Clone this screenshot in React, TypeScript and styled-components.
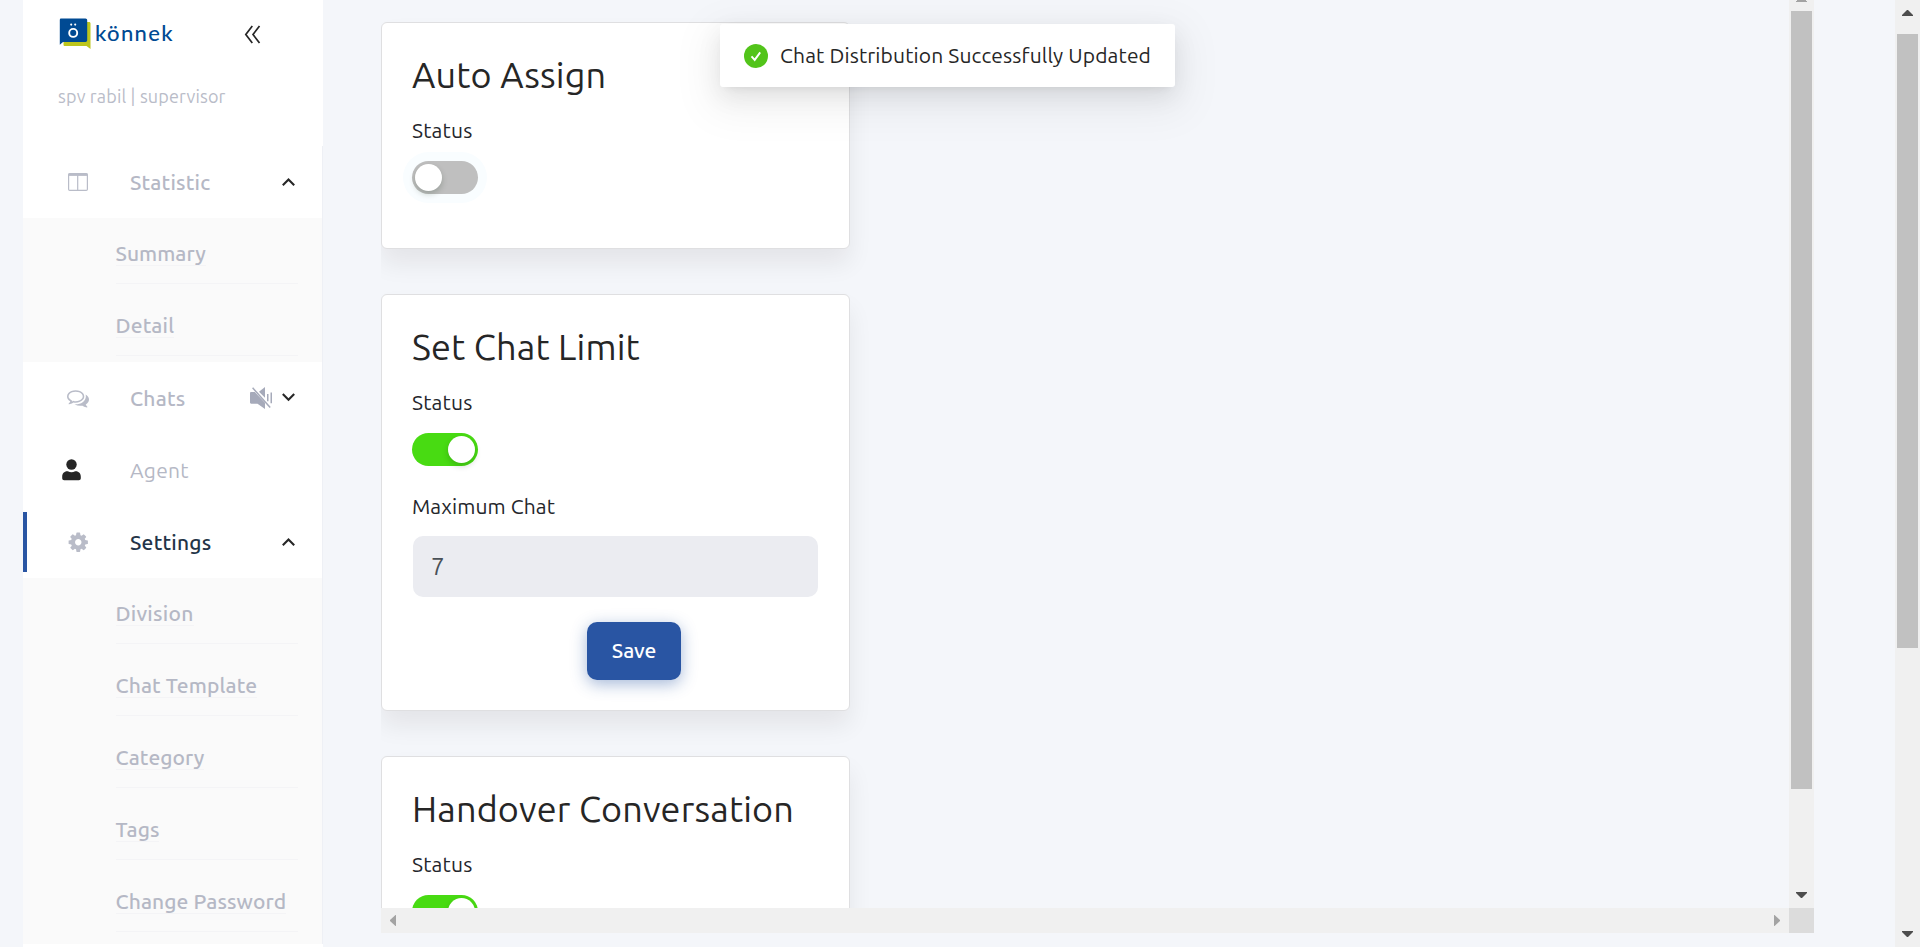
import React from 'react';
import styled, { createGlobalStyle, css } from 'styled-components';

const Global = createGlobalStyle`
  *, *::before, *::after { box-sizing: border-box; }
  body {
    margin: 0;
    background: #f4f6fa;
    color: #262626;
    font-family: 'Ubuntu', 'Noto Sans', sans-serif;
    font-size: 21px;
    overflow: hidden;
  }
`;

const Page = styled.div`
  position: relative;
  display: flex;
  width: 1920px;
  height: 947px;
  padding-left: 23px;
  overflow: hidden;
`;

/* ---------- Sidebar ---------- */

const Sidebar = styled.aside`
  display: flex;
  flex-direction: column;
  flex: none;
  width: 300px;
  background: #fff;
`;

const SidebarHeader = styled.header`
  flex: none;
  height: 146px;
  padding: 18px 0 0 36px;
`;

const BrandRow = styled.div`
  display: flex;
  align-items: flex-start;
  height: 32px;
`;

const BrandMark = styled.svg`
  flex: none;
  width: 32px;
  height: 32px;
`;

const BrandName = styled.span`
  margin-left: 4px;
  width: 149px;
  color: #004a93;
  font: 500 22px/30px 'Lato', 'Noto Sans', sans-serif;
  letter-spacing: 1.35px;
`;

const CollapseButton = styled.button`
  display: flex;
  margin: 7px 0 0;
  padding: 0;
  border: 0;
  background: none;
`;

const UserLine = styled.div`
  margin: 33px 0 0 -1px;
  font-size: 18px;
  line-height: 26px;
  letter-spacing: 0.16px;
  color: #b9bcc8;
  white-space: nowrap;
`;

const Menu = styled.nav`
  display: flex;
  flex-direction: column;
  border-right: 1px solid #eef0f5;
`;

const MenuItem = styled.a<{ $active?: boolean }>`
  display: flex;
  align-items: center;
  height: 72px;
  padding: 0 27px 0 28px;
  color: ${(p) => (p.$active ? '#233447' : '#b5b8c5')};
  ${(p) =>
    p.$active &&
    css`
      background: linear-gradient(#2955a3, #2955a3) 0 6px / 4px 60px no-repeat;
    `}
`;

const MenuIcon = styled.span<{ $shift?: number }>`
  display: flex;
  align-items: center;
  justify-content: center;
  width: 54px;
  margin-right: 25px;
  padding-right: ${(p) => p.$shift ?? 0}px;
`;

const MenuLabel = styled.span<{ $weight?: number }>`
  flex: 1;
  font-weight: ${(p) => p.$weight ?? 500};
  line-height: 32px;
  letter-spacing: 0.22px;
`;

const MuteIcon = styled.svg`
  width: 22px;
  height: 22px;
  margin-right: 10px;
  color: #a6aaba;
`;

const SubMenu = styled.div<{ $bottom: number }>`
  display: flex;
  flex-direction: column;
  padding: 0 24px ${(p) => p.$bottom}px 92.500px;
  background: #fafafa;
`;

const SubItem = styled.a`
  display: flex;
  align-items: flex-start;
  height: 72px;
  padding-top: 25px;
  border-bottom: 1px solid #f4f4f6;
  &:first-child {
    height: 66px;
    padding-top: 19px;
  }
`;

const SubLabel = styled.span<{ $spacing: number }>`
  height: 29px;
  border-bottom: 1px solid #f4f4f6;
  color: #b5b8c5;
  font-weight: 500;
  line-height: 32px;
  letter-spacing: ${(p) => p.$spacing}px;
  white-space: nowrap;
`;

/* ---------- Scrolling content ---------- */

const Panel = styled.main`
  display: grid;
  grid-template-columns: 1408px 25px;
  grid-template-rows: 908px 25px;
  flex: none;
  height: 933px;
  margin: 0 81px 0 58px;
`;

const Viewport = styled.div`
  display: flex;
  flex-direction: column;
  gap: 45px;
  padding-top: 22px;
  overflow: hidden;
`;

const Card = styled.section<{ $height: number }>`
  flex: none;
  width: 469px;
  height: ${(p) => p.$height}px;
  padding: 30px;
  border: 1px solid #dfdfe1;
  border-radius: 6px;
  background: #fff;
  box-shadow: 0 15px 25px rgba(24, 10, 10, 0.07);
`;

const CardTitle = styled.h2`
  margin: 0;
  font-size: 36px;
  font-weight: 400;
  line-height: 44px;
  letter-spacing: 0.16px;
  white-space: nowrap;
`;

const FieldLabel = styled.div<{ $top?: number; $spacing?: number }>`
  height: 32px;
  margin-top: ${(p) => p.$top ?? 16}px;
  line-height: ${(p) => (p.$top ? 32 : 34)}px;
  letter-spacing: ${(p) => p.$spacing ?? 0.2}px;
  color: #24262b;
`;

const Toggle = styled.button<{ $on?: boolean; $focused?: boolean }>`
  display: flex;
  justify-content: ${(p) => (p.$on ? 'flex-end' : 'flex-start')};
  align-items: center;
  width: 66px;
  height: 33px;
  margin: 16px 0 0;
  padding: 0 3px;
  border: 0;
  border-radius: 17px;
  background: ${(p) => (p.$on ? '#48db12' : '#bfbfbf')};
  box-shadow: ${(p) => (p.$focused ? '0 0 0 9px #f9fdff' : 'none')};
`;

const Knob = styled.span`
  width: 27px;
  height: 27px;
  border-radius: 50%;
  background: #fff;
  box-shadow: 0 3px 6px rgba(0, 35, 11, 0.2);
`;

const NumberInput = styled.input`
  display: block;
  width: 405px;
  height: 61px;
  margin: 14px 1px 0;
  padding: 0 18px;
  border: 0;
  border-radius: 10px;
  background: #ebecf1;
  color: #495057;
  font: 400 24px 'Ubuntu', 'Noto Sans', sans-serif;
`;

const SaveButton = styled.button`
  display: block;
  width: 94px;
  height: 58px;
  margin: 25px 0 0 175px;
  padding: 0 0 2px;
  border: 0;
  border-radius: 10px;
  background: #2955a3;
  box-shadow: 0 4px 16px rgba(41, 85, 163, 0.42);
  color: #fff;
  font: 500 21px/56px 'Ubuntu', 'Noto Sans', sans-serif;
  letter-spacing: -0.1px;
`;

/* ---------- Scrollbars ---------- */

const VerticalBar = styled.div<{ $top: number; $bottom: number }>`
  display: flex;
  flex-direction: column;
  justify-content: space-between;
  align-items: center;
  flex: none;
  width: 25px;
  padding: ${(p) => p.$top}px 0 ${(p) => p.$bottom}px;
  overflow: hidden;
  background: #f0f0f0;
`;

const VerticalThumb = styled.div<{ $gap: number; $length: number }>`
  flex: none;
  width: 21px;
  height: ${(p) => p.$length}px;
  margin: ${(p) => p.$gap}px 0 auto;
  background: #c1c1c1;
`;

const ClippedArrow = styled.span`
  width: 11px;
  height: 2px;
  background: linear-gradient(#a3a3a3, #a3a3a3) 50% 0 / 9px 1px no-repeat,
    linear-gradient(#a3a3a3, #a3a3a3) 0 1px / 11px 1px no-repeat;
`;

const HorizontalBar = styled.div`
  display: flex;
  align-items: center;
  justify-content: space-between;
  padding: 0 9px;
  background: #f0f0f0;
`;

const Corner = styled.div`
  background: #dcdcdc;
`;

const ArrowSvg = styled.svg<{ $muted?: boolean }>`
  flex: none;
  display: block;
  fill: ${(p) => (p.$muted ? '#a3a3a3' : '#4d4d4d')};
`;

/* ---------- Toast ---------- */

const Toast = styled.div`
  position: absolute;
  top: 24px;
  left: 720px;
  display: flex;
  align-items: center;
  width: 455px;
  height: 63px;
  padding-left: 24px;
  border-radius: 3px;
  background: #fff;
  box-shadow: 0 4.5px 9px -6px rgba(0, 0, 0, 0.12), 0 9px 24px rgba(0, 0, 0, 0.08),
    0 13.5px 42px 12px rgba(0, 0, 0, 0.05);
`;

const ToastText = styled.span`
  margin-left: 12px;
  padding-bottom: 2px;
  line-height: 32px;
  letter-spacing: 0.14px;
  white-space: nowrap;
`;

const arrows = {
  up: { w: 11, h: 6, d: 'M0 6V5L5 0h1l5 5v1z' },
  down: { w: 11, h: 6, d: 'M0 0v1l5 5h1l5-5V0z' },
  left: { w: 6, h: 11, d: 'M6 0H5.5L0 5v1l5.5 5H6z' },
  right: { w: 6, h: 11, d: 'M0 0h.5L6 5v1L.5 11H0z' },
};

function Arrow({ dir, muted }: { dir: keyof typeof arrows; muted?: boolean }) {
  const a = arrows[dir];
  return (
    <ArrowSvg $muted={muted} width={a.w} height={a.h} viewBox={`0 0 ${a.w} ${a.h}`}>
      <path d={a.d} />
    </ArrowSvg>
  );
}

function Chevron({ open }: { open?: boolean }) {
  return (
    <svg width="13" height="10" viewBox="0 0 13 10" fill="none" stroke="#262626" strokeWidth="2.1">
      <path d={open ? 'M.8 8.200 6.500 2.500l5.700 5.700' : 'M.8 1l5.700 5.700L12.200 1'} />
    </svg>
  );
}

const TableIcon = () => (
  <svg width="20" height="18" viewBox="0 0 20 18" fill="none" stroke="#b9bcc8" strokeWidth="1.2">
    <rect x="0.6" y="0.6" width="18.8" height="16.8" rx="1.2" />
    <path d="M0.5 1.7h19" strokeWidth="2.4" />
    <path d="M9.7 2v15.5" />
  </svg>
);

const ChatsIcon = () => (
  <svg width="22" height="22" viewBox="0 0 1792 1792" fill="#b9bcc8">
    <path d="M704 384q-153 0-286 52t-211.500 141-78.500 191q0 82 53 158t149 132l97 56-35 84q34-20 62-39l44-31 53 10q78 14 153 14 153 0 286-52t211.500-141 78.500-191-78.500-191-211.500-141-286-52zm0-128q191 0 353.500 68.500t256.500 186.500 94 257-94 257-256.500 186.500-353.500 68.500q-86 0-176-16-124 88-278 128-36 9-86 16h-3q-11 0-20.500-8t-11.500-21q-1-3-1-6.500t.5-6.500 2-6l2.500-5 3.500-5.500 4-5 4.500-5 4-4.500q5-6 23-25t26-29.500 22.500-29 25-38.500 20.500-44q-124-72-195-177t-71-224q0-139 94-257t256.500-186.500 353.500-68.500zm822 1169q10 24 20.500 44t25 38.500 22.500 29 26 29.500 23 25q1 1 4 4.500t4.500 5 4 5 3.500 5.500l2.500 5 2 6 .5 6.500-1 6.500q-3 14-13 22t-22 7q-50-7-86-16-154-40-278-128-90 16-176 16-271 0-472-132 58 4 88 4 161 0 309-45t264-129q125-92 192-212t67-254q0-77-23-152 129 71 204 178t75 230q0 120-71 224.500t-195 176.500z" />
  </svg>
);

const GearIcon = () => (
  <svg width="22.5" height="22.5" viewBox="0 0 1792 1792" fill="#b9bcc8">
    <path d="M1152 896q0-106-75-181t-181-75-181 75-75 181 75 181 181 75 181-75 75-181zm512-109v222q0 12-8 23t-20 13l-185 28q-19 54-39 91 35 50 107 138 10 12 10 25t-9 23q-27 37-99 108t-94 71q-12 0-26-9l-138-108q-44 23-91 38-16 136-29 186-7 28-36 28h-222q-14 0-24.500-8.500t-11.500-21.500l-28-184q-49-16-90-37l-141 107q-10 9-25 9-14 0-25-11-126-114-165-168-7-10-7-23 0-12 8-23 15-21 51-66.500t54-70.500q-27-50-41-99l-183-27q-13-2-21-12.500t-8-23.500v-222q0-12 8-23t19-13l186-28q14-46 39-92-40-57-107-138-10-12-10-24 0-10 9-23 26-36 98.500-107.500t94.500-71.500q13 0 26 10l138 107q44-23 91-38 16-136 29-186 7-28 36-28h222q14 0 24.500 8.500t11.500 21.500l28 184q49 16 90 37l142-107q9-9 24-9 13 0 25 10 129 119 165 170 7 8 7 22 0 12-8 23-15 21-51 66.500t-54 70.500q26 50 41 98l183 28q13 2 21 12.500t8 23.500z" />
  </svg>
);

const PersonIcon = () => (
  <svg width="19" height="22" viewBox="0 0 19 22" fill="#262626">
    <circle cx="9.5" cy="5.5" r="5.2" />
    <path d="M0.2 19.2v-1.5c0-3 2-5.4 5-5.4h.6a8 8 0 0 0 7.400 0h.6c3 0 5 2.400 5 5.400v1.500c0 1.200-.8 2-2 2H2.200c-1.200 0-2-.8-2-2z" />
  </svg>
);

const Muted = () => (
  <MuteIcon viewBox="0 0 22 22" fill="currentColor">
    <path d="M1.2 4.900h3.600L15 15.800V22l-7.500-5.200H1.200C.5 16.800 0 16.300 0 15.600V6.100c0-.7.500-1.200 1.200-1.200z" />
    <path d="M9 4.800 15 0v10.800z" />
    <path d="M3.900 .8 21 20.100" stroke="#fff" strokeWidth="1.200" />
    <path d="M2.600 .8 20.200 20.600" stroke="currentColor" strokeWidth="1.500" />
    <path d="M17 7v7.300h1.500V7zM20.500 5.500h1.500v10.800h-1.500z" />
  </MuteIcon>
);

const statisticLinks: [string, number][] = [
  ['Summary', 0.02],
  ['Detail', 0.18],
];

const settingsLinks: [string, number][] = [
  ['Division', 0.28],
  ['Chat Template', 0.1],
  ['Category', 0.06],
  ['Tags', 0.05],
  ['Change Password', 0.1],
];

function Links({ items, bottom }: { items: [string, number][]; bottom: number }) {
  return (
    <SubMenu $bottom={bottom}>
      {items.map(([label, spacing]) => (
        <SubItem key={label}>
          <SubLabel $spacing={spacing}>{label}</SubLabel>
        </SubItem>
      ))}
    </SubMenu>
  );
}

export default function App() {
  return (
    <>
      <Global />
      <Page>
        <Sidebar>
          <SidebarHeader>
            <BrandRow>
              <BrandMark viewBox="0 0 32 32">
                <path d="M5 4h25c1 0 1.500.6 1.500 1.500V31l-4-3H6C5 28 4.500 27.500 4.500 26.500z" fill="#bcc51c" />
                <path d="M2 .5h24.500c1 0 1.700.8 1.700 1.800V22c0 1.200-.7 2-1.700 2H4L.8 26.800V2C.8 1.100 1.200.5 2 .5z" fill="#004a93" />
                <circle cx="14.200" cy="14.900" r="4" fill="none" stroke="#fff" strokeWidth="1.900" />
                <circle cx="12.200" cy="6.600" r="1.050" fill="#fff" />
                <circle cx="16.200" cy="6.600" r="1.050" fill="#fff" />
              </BrandMark>
              <BrandName>könnek</BrandName>
              <CollapseButton aria-label="Collapse menu">
                <svg width="17" height="19" viewBox="0 0 17 19" fill="none" stroke="#262626" strokeWidth="1.7">
                  <path d="M8.3 1 1.8 9.5l6.5 8.500M15.500 1 9 9.500l6.500 8.500" />
                </svg>
              </CollapseButton>
            </BrandRow>
            <UserLine>spv rabil | supervisor</UserLine>
          </SidebarHeader>
          <Menu>
            <MenuItem>
              <MenuIcon $shift={1}><TableIcon /></MenuIcon>
              <MenuLabel>Statistic</MenuLabel>
              <Chevron open />
            </MenuItem>
            <Links items={statisticLinks} bottom={6} />
            <MenuItem>
              <MenuIcon><ChatsIcon /></MenuIcon>
              <MenuLabel>Chats</MenuLabel>
              <Muted />
              <Chevron />
            </MenuItem>
            <MenuItem>
              <MenuIcon $shift={13}><PersonIcon /></MenuIcon>
              <MenuLabel $weight={400}>Agent</MenuLabel>
            </MenuItem>
            <MenuItem $active>
              <MenuIcon $shift={0}><GearIcon /></MenuIcon>
              <MenuLabel>Settings</MenuLabel>
              <Chevron open />
            </MenuItem>
            <Links items={settingsLinks} bottom={12} />
          </Menu>
        </Sidebar>

        <Panel>
          <Viewport>
            <Card $height={227}>
              <CardTitle>Auto Assign</CardTitle>
              <FieldLabel>Status</FieldLabel>
              <Toggle $focused><Knob /></Toggle>
            </Card>
            <Card $height={417}>
              <CardTitle>Set Chat Limit</CardTitle>
              <FieldLabel>Status</FieldLabel>
              <Toggle $on><Knob /></Toggle>
              <FieldLabel $top={24} $spacing={0.12}>Maximum Chat</FieldLabel>
              <NumberInput defaultValue="7" />
              <SaveButton>Save</SaveButton>
            </Card>
            <Card $height={227}>
              <CardTitle>Handover Conversation</CardTitle>
              <FieldLabel>Status</FieldLabel>
              <Toggle $on><Knob /></Toggle>
            </Card>
          </Viewport>
          <VerticalBar $top={0} $bottom={10}>
            <ClippedArrow />
            <VerticalThumb $gap={9} $length={778} />
            <Arrow dir="down" />
          </VerticalBar>
          <HorizontalBar>
            <Arrow dir="left" muted />
            <Arrow dir="right" muted />
          </HorizontalBar>
          <Corner />
        </Panel>

        <VerticalBar $top={10} $bottom={10}>
          <Arrow dir="up" />
          <VerticalThumb $gap={18} $length={614} />
          <Arrow dir="down" />
        </VerticalBar>

        <Toast role="status">
          <svg width="24" height="24" viewBox="0 0 24 24">
            <circle cx="12" cy="12" r="12" fill="#52c41a" />
            <path d="M7.5 12.300l3.200 3.600 5.500-7.500" fill="none" stroke="#fff" strokeWidth="1.900" />
          </svg>
          <ToastText>Chat Distribution Successfully Updated</ToastText>
        </Toast>
      </Page>
    </>
  );
}
